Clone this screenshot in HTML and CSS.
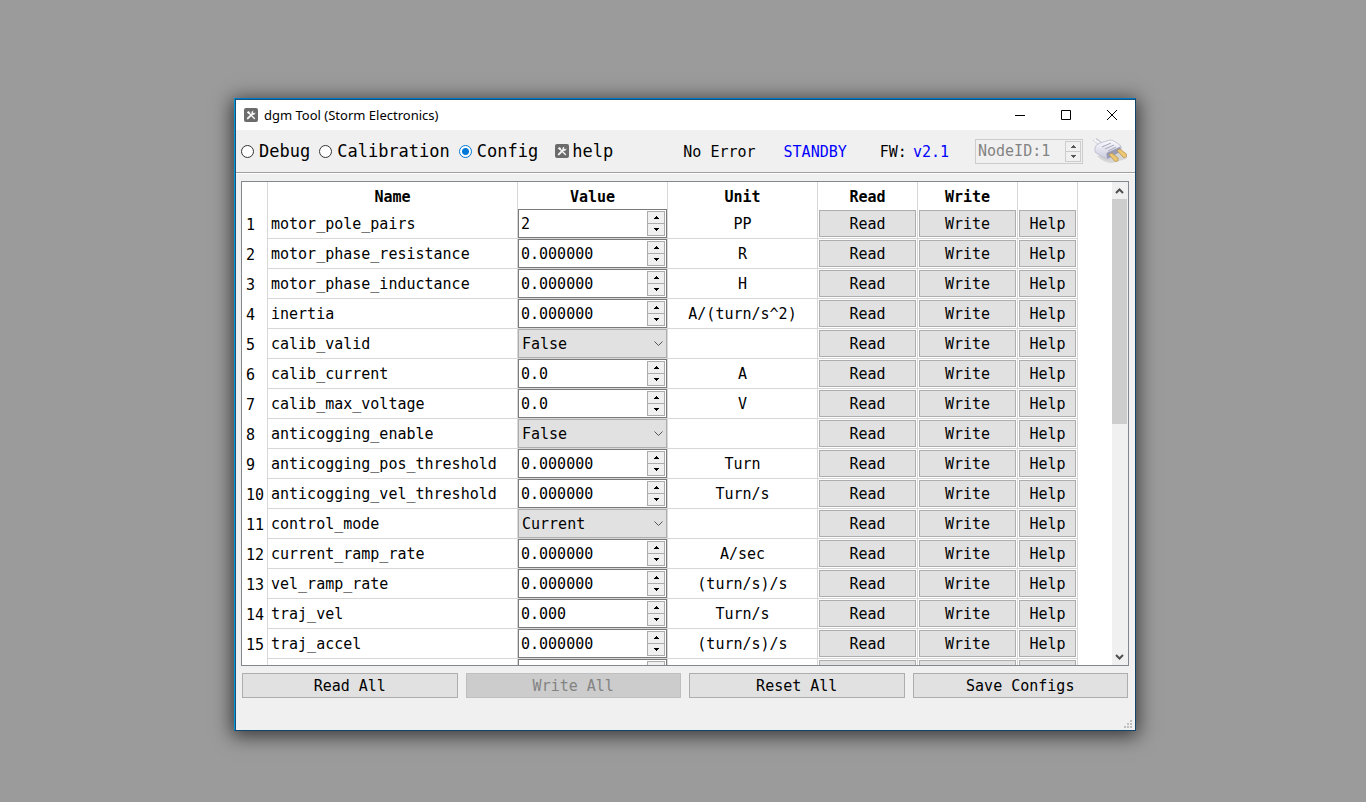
FILE: index.html
```html
<!DOCTYPE html>
<html lang="en">
<head>
<meta charset="utf-8">
<title>dgm Tool (Storm Electronics)</title>
<link rel="stylesheet" href="styles.css">
</head>
<body>
<svg class="defs" aria-hidden="true">
  <symbol id="tools" viewBox="0 0 14 14">
    <rect width="14" height="14" rx="2" fill="#6b6b6b"/>
    <path d="M5 5 10.400 10.400" stroke="#f4f4f4" stroke-width="1.400" stroke-linecap="round" fill="none"/>
    <path d="M8.600 5.600 3.800 10.400" stroke="#f4f4f4" stroke-width="2" stroke-linecap="round" fill="none"/>
    <path d="M2.800 4.400 4.300 2.900 6.200 4.200 4.600 6Z" fill="#f4f4f4"/>
    <path d="M11.400 4.200 10.200 5.200 9 4.600 8.900 3.600 9.900 2.700Q7.400 2.600 7.300 5L8.800 6.800Q11.600 6.700 11.400 4.200Z" fill="#f4f4f4"/>
  </symbol>
  <symbol id="up" viewBox="0 0 5 3"><path d="M2 0h1v1h1v1h1v1H0V2h1V1h1z"/></symbol>
  <symbol id="down" viewBox="0 0 5 3"><path d="M0 0h5v1H4v1H3v1H2V2H1V1H0z"/></symbol>
</svg>
<main class="window">
  <header class="titlebar">
    <svg class="app-icon"><use href="#tools"/></svg>
    <h1 class="title">dgm Tool (Storm Electronics)</h1>
    <button class="caption" aria-label="Minimize"><svg viewBox="0 0 12 12"><path d="M1 6.500h10"/></svg></button>
    <button class="caption" aria-label="Maximize"><svg viewBox="0 0 12 12"><path d="M1.500 1.500h9v9h-9z"/></svg></button>
    <button class="caption" aria-label="Close"><svg viewBox="0 0 12 12"><path d="M1 1l10 10M11 1L1 11"/></svg></button>
  </header>
  <div class="toolbar">
    <label class="mode"><input type="radio" name="mode">Debug</label>
    <label class="mode"><input type="radio" name="mode">Calibration</label>
    <label class="mode"><input type="radio" name="mode" checked>Config</label>
    <button class="help"><svg><use href="#tools"/></svg>help</button>
    <div class="status">
      <span class="error">No Error</span>
      <span class="state">STANDBY</span>
      <span class="firmware">FW: <b>v2.1</b></span>
    </div>
    <div class="spin node">
      <input type="text" value="NodeID:1" aria-label="Node ID" disabled>
      <span class="steps"><button disabled aria-label="Increase"><svg><use href="#up"/></svg></button><button disabled aria-label="Decrease"><svg><use href="#down"/></svg></button></span>
    </div>
    <button class="plug" aria-label="Connect">
      <svg viewBox="0 0 36 30">
        <defs>
          <linearGradient id="shell" x1="0" y1="0" x2="0" y2="1"><stop offset="0" stop-color="#fbfbff"/><stop offset="1" stop-color="#c9cade"/></linearGradient>
          <linearGradient id="brass" x1="0" y1="1" x2="1" y2="0"><stop offset="0" stop-color="#c08f3c"/><stop offset=".5" stop-color="#f0cd78"/><stop offset="1" stop-color="#c99a45"/></linearGradient>
        </defs>
        <path d="M5 20Q12 27 20 27L34 23 35 20 28 15Z" fill="#999" opacity=".3"/>
        <path d="M1 4 8 9M4 2.500 10 7" stroke="#c9c9d4" stroke-width="1.500" fill="none"/>
        <path d="M2 4 9 8" stroke="#f6f6fb" stroke-width="2" fill="none"/>
        <path d="M3 12Q3 9 8 7L18 4Q22 4 29 10L29 15 16 23Q13 23 3 16Z" fill="url(#shell)" stroke="#b9bacb" stroke-width=".8"/>
        <path d="M14.500 17 28.500 10.500V15.500L16 22.500Q14.500 22.500 14.500 17Z" fill="#9a9cb4"/>
        <path d="m10 11 9-4m-6 6 9-4m-6 6 8-4" stroke="#a6a7b8" fill="none"/>
        <path d="M17 18.500 20 17 26 22V25L23 25.500Z" fill="url(#brass)" stroke="#b38b48" stroke-width=".6"/>
        <path d="M25 14.500 28 13 34.500 18V21L31.500 21.500Z" fill="url(#brass)" stroke="#b38b48" stroke-width=".6"/>
      </svg>
    </button>
  </div>
  <section class="content">
    <div class="grid">
      <div class="rows">
        <table>
          <colgroup><col class="c-num"><col class="c-name"><col class="c-mid"><col class="c-mid"><col class="c-act"><col class="c-act"><col class="c-help"></colgroup>
          <thead><tr><td></td><th>Name</th><th>Value</th><th>Unit</th><th>Read</th><th>Write</th><td></td></tr></thead>
          <tbody id="params"></tbody>
        </table>
      </div>
      <div class="scrollbar">
        <button aria-label="Scroll up"><svg viewBox="0 0 9 6"><path d="M1 5l3.500-3.500L8 5"/></svg></button>
        <div class="track"><div class="thumb"></div></div>
        <button aria-label="Scroll down"><svg viewBox="0 0 9 6"><path d="M1 1l3.500 3.500L8 1"/></svg></button>
      </div>
    </div>
    <div class="actions">
      <button class="btn">Read All</button>
      <button class="btn" disabled>Write All</button>
      <button class="btn">Reset All</button>
      <button class="btn">Save Configs</button>
    </div>
  </section>
  <footer class="statusbar">
    <svg viewBox="0 0 8 8"><path d="M6 0h2v2H6zM3 3h2v2H3zM6 3h2v2H6zM0 6h2v2H0zM3 6h2v2H3zM6 6h2v2H6z"/></svg>
  </footer>
</main>
<script src="app.js"></script>
</body>
</html>
```
FILE: styles.css
```css
* { box-sizing: border-box; }

body {
  margin: 0;
  min-height: 100vh;
  padding: 98px 230px 71px 234px;
  background: #9b9b9b;
  color: #000;
  font: 15px/20px "DejaVu Sans Mono", monospace;
}

button, input, select { font: inherit; color: inherit; margin: 0; border-radius: 0; }
button { padding: 0; border: 0; background: none; }
svg { display: block; }
.defs { display: none; }

.window {
  display: flex;
  flex-direction: column;
  height: calc(100vh - 169px);
  min-width: 900px;
  background: #f0f0f0;
  border: 1px solid #12456b;
  border-left: 1px solid #0095d6;
  border-top: 1px solid #0078c8;
  box-shadow: inset 1px 1px 0 #15527a, 0 3px 18px 2px rgba(0, 0, 0, .65);
  padding: 1px 0 0 1px;
}

.titlebar {
  display: flex;
  align-items: center;
  height: 30px;
  padding-left: 8px;
  background: #fff;
}
.app-icon { width: 14px; height: 14px; }
.title {
  flex: 1;
  margin: 0 0 0 6px;
  font: 13px/18px "Noto Sans", sans-serif;
}
.caption { display: grid; place-items: center; width: 46px; height: 30px; }
.caption svg { width: 12px; height: 12px; fill: none; stroke: #000; }

.toolbar {
  display: flex;
  align-items: center;
  height: 43px;
  padding: 0 7px 0 5px;
  border-bottom: 1px solid #a0a0a0;
  box-shadow: 0 1px 0 #fff;
}
.mode { display: flex; align-items: center; gap: 5px; margin-right: 9px; font-size: 17px; }
.mode input {
  appearance: none;
  width: 13px;
  height: 13px;
  border: 1px solid #333;
  border-radius: 50%;
  background: #fff;
}
.mode input:checked {
  border-color: #0078d7;
  background: radial-gradient(circle, #0078d7 3px, #fff 4px);
}
.help { display: flex; align-items: center; gap: 3px; margin-left: 8px; font-size: 17px; line-height: 20px; }
.help svg { width: 14px; height: 14px; }
.status { display: flex; margin-left: auto; padding-top: 1px; white-space: nowrap; }
.state { margin: 0 33px 0 28px; color: #00f; }
.firmware { display: flex; gap: 6px; }
.firmware b { font-weight: normal; color: #00f; }

.spin {
  display: flex;
  width: 100%;
  height: 29px;
  padding: 1px;
  background: #fff;
  border: 1px solid #7a7a7a;
}
.spin input {
  flex: 1;
  min-width: 0;
  padding: 0 0 0 1px;
  border: 0;
  background: none;
}
.steps {
  display: flex;
  flex-direction: column;
  width: 18px;
  height: 25px;
  border: 1px solid #acacac;
  background: #f0f0f0;
}
.steps button { flex: 1; display: grid; place-items: center; }
.steps button + button { border-top: 1px solid #acacac; }
.steps svg { width: 5px; height: 3px; }
.node { width: 108px; height: 25px; margin: 0 9px 0 26px; background: none; border-color: #ccc; color: #838383; }
.node input { color: #838383; }
.node .steps { width: 16px; height: 21px; border-color: #ccc; }
.node .steps button + button { border-color: #ccc; }
.node svg { fill: #555; }
.plug svg { width: 36px; height: 30px; }

.content {
  flex: 1;
  min-height: 0;
  display: flex;
  flex-direction: column;
  gap: 7px;
  padding: 8px 6px 0 5px;
}
.grid {
  flex: 1;
  min-height: 0;
  display: flex;
  background: #fff;
  border: 1px solid #828790;
}
.rows { flex: 1; overflow: hidden; }

table { width: 836px; table-layout: fixed; border-collapse: separate; border-spacing: 0; }
.c-num { width: 26px; }
.c-name { width: 250px; }
.c-mid { width: 150px; }
.c-act { width: 100px; }
.c-help { width: 60px; }
thead tr { height: 27px; }
tbody tr { height: 30px; }
th, td {
  padding: 0;
  border-right: 1px solid #d8d8d8;
  text-align: center;
  white-space: nowrap;
}
thead th { padding-top: 2px; }
tbody td { border-bottom: 1px solid #d8d8d8; }
tbody th { padding: 2px 0 0 4px; text-align: left; font-weight: normal; }
.name { padding-left: 3px; text-align: left; }
.name label { display: block; }

.btn {
  display: block;
  height: 27px;
  background: #e1e1e1;
  border: 1px solid #adadad;
}
.btn:disabled { background: #ccc; border-color: #bfbfbf; color: #838383; }
.cell { padding: 1px; }
.cell .btn { width: 100%; }

.combo { display: grid; align-items: center; height: 29px; }
.combo select, .combo svg { grid-area: 1 / 1; }
.combo select {
  appearance: none;
  width: 100%;
  height: 29px;
  padding: 0 3px;
  background: #e1e1e1;
  border: 1px solid #adadad;
}
.combo svg {
  justify-self: end;
  width: 9px;
  height: 6px;
  margin-right: 4px;
  fill: none;
  stroke: #555;
  pointer-events: none;
}

.scrollbar { display: flex; flex-direction: column; width: 16px; background: #f0f0f0; }
.scrollbar button { display: grid; justify-content: start; align-items: center; height: 17px; padding-left: 3px; }
.scrollbar svg { width: 9px; height: 6px; fill: none; stroke: #505050; stroke-width: 2; }
.track { flex: 1; }
.thumb { height: 50%; width: 15px; background: #cdcdcd; }

.actions { display: flex; gap: 8px; padding: 0 1px; }
.actions .btn { flex: 1; height: 25px; }

.statusbar { display: flex; justify-content: flex-end; align-items: flex-end; height: 32px; padding: 0 3px 2px; }
.statusbar svg { width: 8px; height: 8px; fill: #bfbfbf; }
```
FILE: app.js
```js
const params = [
  ["motor_pole_pairs", "2", "PP"],
  ["motor_phase_resistance", "0.000000", "R"],
  ["motor_phase_inductance", "0.000000", "H"],
  ["inertia", "0.000000", "A/(turn/s^2)"],
  ["calib_valid", ["False", "True"], ""],
  ["calib_current", "0.0", "A"],
  ["calib_max_voltage", "0.0", "V"],
  ["anticogging_enable", ["False", "True"], ""],
  ["anticogging_pos_threshold", "0.000000", "Turn"],
  ["anticogging_vel_threshold", "0.000000", "Turn/s"],
  ["control_mode", ["Current"], ""],
  ["current_ramp_rate", "0.000000", "A/sec"],
  ["vel_ramp_rate", "0.000000", "(turn/s)/s"],
  ["traj_vel", "0.000", "Turn/s"],
  ["traj_accel", "0.000000", "(turn/s)/s"],
];

const combo = (id, options) => `<div class="combo"><select id="${id}">${options
  .map((o) => `<option>${o}</option>`).join("")}</select><svg viewBox="0 0 9 6"><path d="M.5.5l4 4 4-4"/></svg></div>`;

const spin = (id, value) => `<div class="spin"><input type="text" id="${id}" value="${value}" aria-label="Value"><span class="steps">
  <button aria-label="Increase"><svg><use href="#up"/></svg></button>
  <button aria-label="Decrease"><svg><use href="#down"/></svg></button></span></div>`;

const rows = params.map(([name, value, unit], i) => `<tr>
  <th scope="row">${i + 1}</th>
  <td class="name"><label for="${name}">${name}</label></td>
  <td>${Array.isArray(value) ? combo(name, value) : spin(name, value)}</td>
  <td>${unit}</td>
  <td class="cell"><button class="btn">Read</button></td>
  <td class="cell"><button class="btn">Write</button></td>
  <td class="cell"><button class="btn">Help</button></td>
</tr>`);

// Row that has not been loaded yet: controls without content.
rows.push(`<tr><th></th><td></td><td>${spin("pending", "")}</td><td></td>
  ${'<td class="cell"><button class="btn" aria-label="Pending"></button></td>'.repeat(3)}</tr>`);

document.getElementById("params").innerHTML = rows.join("");
```
